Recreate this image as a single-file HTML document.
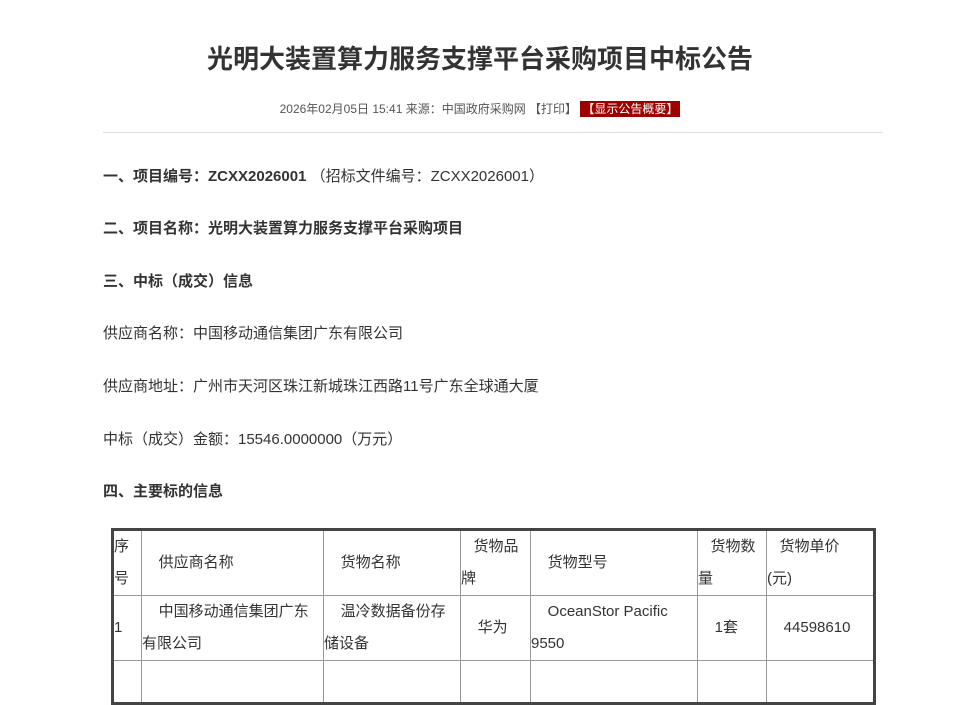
<!DOCTYPE html>
<html><head><meta charset="utf-8"><style>
body{margin:0;background:#fff;font-family:"Liberation Sans","Noto Sans CJK SC",sans-serif;color:#333;width:960px;height:705px;overflow:hidden;position:relative}
.t{position:absolute;left:0;width:960px;text-align:center;top:39px;font-size:26px;font-weight:bold;color:#333}
.m{position:absolute;left:0;width:960px;text-align:center;top:100px;font-size:12px;color:#555;padding-left:0}
.m span{background:#9e0000;color:#fff;padding:1px 2px}
.hr{position:absolute;left:103px;width:780px;top:132px;border-top:1px solid #ddd}
.p{position:absolute;left:103px;font-size:15px;line-height:20px;color:#333}
.b{font-weight:bold}
table{position:absolute;left:111px;top:528px;border-collapse:collapse;border:3px solid #444;font-size:15px;color:#333;table-layout:fixed}
td{border:1px solid #999;padding:0;line-height:32px;vertical-align:middle}
</style></head><body>
<div class="t">光明大装置算力服务支撑平台采购项目中标公告</div>
<div class="m">2026年02月05日 15:41 来源：中国政府采购网 【打印】 <span>【显示公告概要】</span></div>
<div class="hr"></div>
<div class="p b" style="top:167px">一、项目编号：ZCXX2026001 <span style="font-weight:normal">（招标文件编号：ZCXX2026001）</span></div>
<div class="p b" style="top:219px">二、项目名称：光明大装置算力服务支撑平台采购项目</div>
<div class="p b" style="top:272px">三、中标（成交）信息</div>
<div class="p" style="top:324px">供应商名称：中国移动通信集团广东有限公司</div>
<div class="p" style="top:377px">供应商地址：广州市天河区珠江新城珠江西路11号广东全球通大厦</div>
<div class="p" style="top:430px">中标（成交）金额：15546.0000000（万元）</div>
<div class="p b" style="top:482px">四、主要标的信息</div>
<table>
<colgroup><col style="width:29px"><col style="width:182px"><col style="width:137px"><col style="width:70px"><col style="width:167px"><col style="width:69px"><col style="width:108px"></colgroup>
<tr style="height:66px"><td>序<br>号</td><td>&nbsp;&nbsp;&nbsp;&nbsp;供应商名称</td><td>&nbsp;&nbsp;&nbsp;&nbsp;货物名称</td><td>&nbsp;&nbsp;&nbsp;货物品<br>牌</td><td>&nbsp;&nbsp;&nbsp;&nbsp;货物型号</td><td>&nbsp;&nbsp;&nbsp;货物数<br>量</td><td>&nbsp;&nbsp;&nbsp;货物单价<br>(元)</td></tr>
<tr style="height:63px"><td>1</td><td>&nbsp;&nbsp;&nbsp;&nbsp;中国移动通信集团广东<br>有限公司</td><td>&nbsp;&nbsp;&nbsp;&nbsp;温冷数据备份存<br>储设备</td><td>&nbsp;&nbsp;&nbsp;&nbsp;华为</td><td>&nbsp;&nbsp;&nbsp;&nbsp;OceanStor Pacific<br>9550</td><td>&nbsp;&nbsp;&nbsp;&nbsp;1套</td><td>&nbsp;&nbsp;&nbsp;&nbsp;44598610</td></tr>
<tr style="height:43px"><td></td><td></td><td></td><td></td><td></td><td></td><td></td></tr>
</table>
</body></html>
